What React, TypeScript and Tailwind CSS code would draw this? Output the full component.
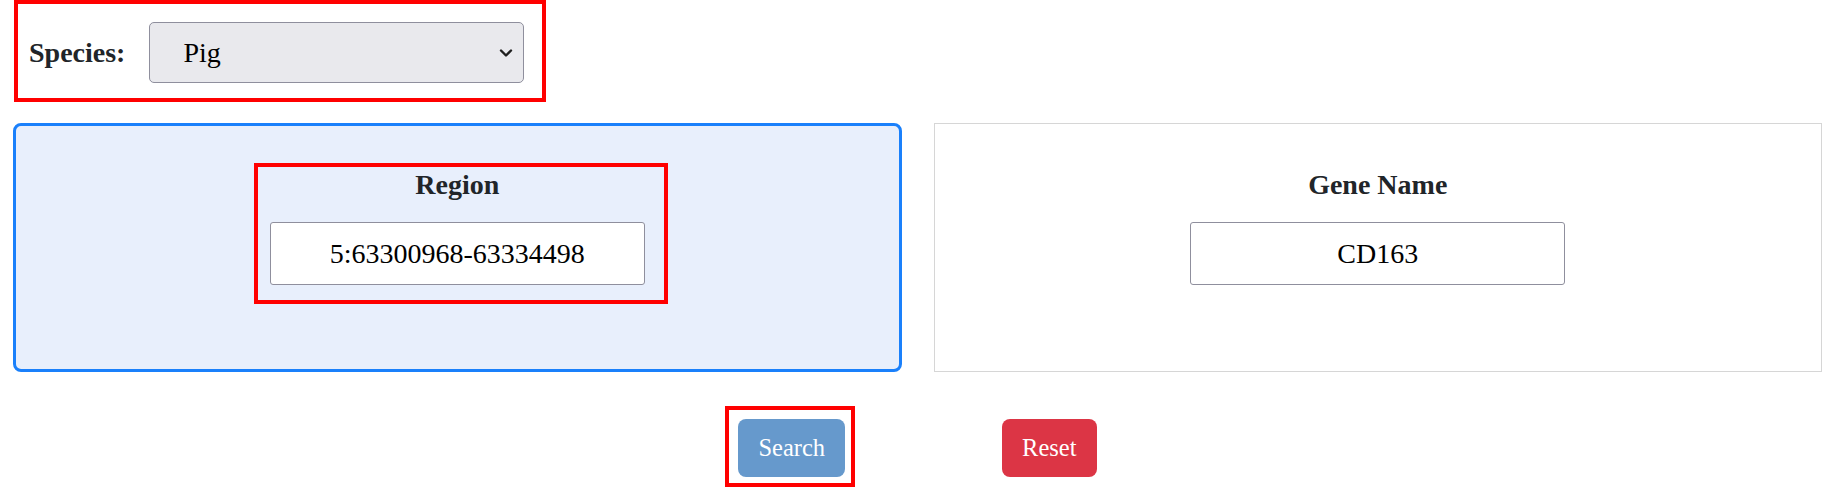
import { useState } from "react";

function Chevron() {
  return (
    <svg
      viewBox="0 0 14 8"
      className="pointer-events-none absolute right-[11px] top-1/2 h-[8px] w-[14px] -translate-y-1/2"
      fill="none"
      stroke="#1f1f1f"
      strokeWidth="2.4"
      strokeLinecap="round"
      strokeLinejoin="round"
    >
      <path d="M2 1.5 7 6.5 12 1.5" />
    </svg>
  );
}

// red annotation frame drawn over a control
function Mark({ className }: { className: string }) {
  return <div className={`pointer-events-none absolute border-4 border-[#ff0000] ${className}`} />;
}

export default function App() {
  const [species, setSpecies] = useState("Pig");
  const [region, setRegion] = useState("5:63300968-63334498");
  const [gene, setGene] = useState("CD163");

  return (
    <div className="min-h-[487px] bg-white pl-[13px] pr-[8px] font-['Liberation_Serif',serif] text-[#212529]">
      <div className="relative ml-px h-[102px] w-[532px] pl-[15px] pt-[22px]">
        <Mark className="inset-0" />
        <div className="flex items-center gap-[24px]">
          <label className="text-[28px] font-bold leading-[32px]">Species:</label>
          <div className="relative">
            <select
              value={species}
              onChange={(e) => setSpecies(e.target.value)}
              className="h-[61px] w-[375px] appearance-none rounded-[5px] border border-[#8f8f9d] bg-[#e9e9ed] pl-[33px] text-[28px] text-black outline-none"
            >
              <option>Pig</option>
              <option>Cattle</option>
              <option>Chicken</option>
              <option>Sheep</option>
            </select>
            <Chevron />
          </div>
        </div>
      </div>

      <div className="mt-[21px] grid h-[249px] grid-cols-2 gap-[32px]">
        <div className="flex flex-col items-center rounded-[8px] border-[3px] border-[#1a80fb] bg-[#e8effc] pt-[43px]">
          <div className="relative flex flex-col items-center">
            <Mark className="-left-[16px] -right-[23px] -top-[6px] -bottom-[19px]" />
            <h5 className="text-[28px] font-bold leading-[32px]">Region</h5>
            <input
              value={region}
              onChange={(e) => setRegion(e.target.value)}
              className="mt-[21px] h-[63px] w-[375px] rounded-[3px] border border-[#8f8f9d] bg-white text-center text-[28px] text-black outline-none"
            />
          </div>
        </div>
        <div className="flex flex-col items-center border border-[#d6d6d6] bg-white pt-[45px]">
          <h5 className="text-[28px] font-bold leading-[32px]">Gene Name</h5>
          <input
            value={gene}
            onChange={(e) => setGene(e.target.value)}
            className="mt-[21px] h-[63px] w-[375px] rounded-[3px] border border-[#8f8f9d] bg-white text-center text-[28px] text-black outline-none"
          />
        </div>
      </div>

      <div className="mt-[47px] flex justify-center gap-[157px]">
        <div className="relative">
          <Mark className="-left-[13px] -right-[10px] -top-[13px] -bottom-[10px]" />
          <button className="h-[58px] rounded-[8px] bg-[#6699cc] px-[20px] text-[24.5px] text-white">
            Search
          </button>
        </div>
        <button
          onClick={() => {
            setRegion("");
            setGene("");
          }}
          className="h-[58px] rounded-[8px] bg-[#dc3545] px-[20px] text-[24.5px] text-white"
        >
          Reset
        </button>
      </div>
    </div>
  );
}
